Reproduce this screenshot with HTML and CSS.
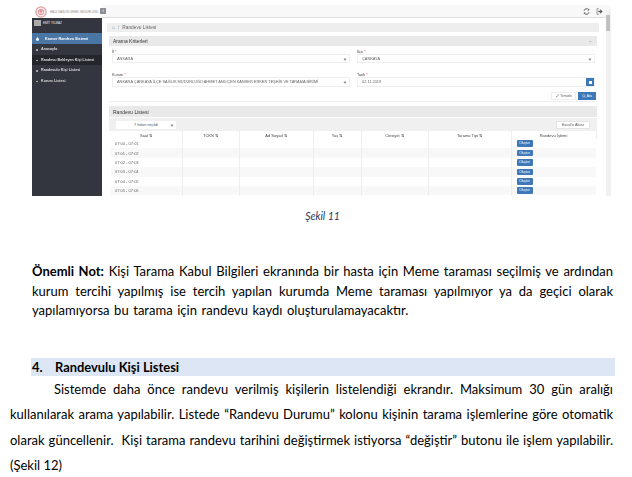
FILE: index.html
```html
<!DOCTYPE html>
<html lang="tr">
<head>
<meta charset="utf-8">
<title>Randevu Listesi</title>
<link rel="stylesheet" href="styles.css">
</head>
<body>
<div class="shot">
  <aside class="side">
    <div class="brand">
      <svg class="logo" viewBox="0 0 14 14"><circle cx="7" cy="7" r="6" fill="#f8eeee" stroke="#d9a0a0" stroke-width="1.4"/><circle cx="7" cy="7" r="3.200" fill="none" stroke="#d27c7c" stroke-width=".9"/><path d="M7 4.500v5M5 6h4" stroke="#c45" stroke-width=".7"/></svg>
      <span class="brand-text">HALK SAĞLIĞI GENEL MÜDÜRLÜĞÜ</span>
    </div>
    <div class="user"><span class="avatar"></span><span>EMİT YILMAZ</span></div>
    <div class="menu-title"><svg class="drop" viewBox="0 0 6 8"><path d="M3 0C4 2 6 3.500 6 5.200A3 2.800 0 0 1 0 5.200C0 3.500 2 2 3 0Z" fill="#fff"/></svg>Kanser Randevu Sistemi</div>
    <div class="menu-item">Anasayfa</div>
    <div class="menu-item current">Randevu Bekleyen Kişi Listesi</div>
    <div class="menu-item">Randevulu Kişi Listesi</div>
    <div class="menu-item">Kurum Listesi</div>
  </aside>
  <div class="app">
    <header class="topbar">
      <span class="back">‹</span>
      <span class="top-icons">
        <svg class="ic" viewBox="0 0 10 10"><path d="M1.500 4A3.600 3.600 0 0 1 8 2.500M8.500 6A3.600 3.600 0 0 1 2 7.500" fill="none" stroke="#555" stroke-width="1.300"/><path d="M8.800.8V3.500H6.100ZM1.200 9.200V6.500H3.900Z" fill="#555"/></svg>
        <svg class="ic" viewBox="0 0 10 10"><path d="M4 1H1.500V9H4" fill="none" stroke="#888" stroke-width="1.200"/><path d="M3.500 3.800H6V1.800L9.500 5 6 8.200V6.200H3.500Z" fill="#555"/></svg>
      </span>
    </header>
    <div class="content">
      <main class="main">
        <div class="crumb"><span class="home">⌂</span><span class="slash">/</span>Randevu Listesi</div>
        <section class="card search">
          <div class="card-head"><span>Arama Kriterleri</span><span class="minus">−</span></div>
          <div class="form">
            <div class="field"><label>İl <b>*</b></label><div class="select">ANKARA<i></i></div></div>
            <div class="field"><label>İlçe <b>*</b></label><div class="select">ÇANKAYA<i></i></div></div>
            <div class="field"><label>Kurum <b>*</b></label><div class="select tall">ANKARA ÇANKAYA İLÇE SAĞLIK MÜDÜRLÜĞÜ AHMET ANDIÇEN KANSER ERKEN TEŞHİS VE TARAMA BİRİMİ<i></i></div></div>
            <div class="field"><label>Tarih <b>*</b></label><div class="select tall">02.11.2019<span class="cal"></span></div></div>
          </div>
          <div class="actions">
            <span class="btn"><svg class="mini" viewBox="0 0 6 6"><path d="M1 5.500 3 2.500 4 3.500ZM3.500 2 5 .5 5.500 1 4.200 2.800Z" fill="#444"/></svg>Temizle</span>
            <span class="btn primary"><svg class="mini" viewBox="0 0 6 6"><circle cx="2.500" cy="2.500" r="1.700" fill="none" stroke="#fff" stroke-width=".7"/><path d="M3.800 3.800 5.500 5.500" stroke="#fff" stroke-width=".8"/></svg>Ara</span>
          </div>
        </section>
        <section class="card">
          <div class="card-head list"><span>Randevu Listesi</span></div>
          <div class="toolbar"><span class="cols">7 kolon seçildi<i></i></span><span class="excel">Excel'e Aktar</span></div>
          <table class="grid">
            <colgroup><col class="c1"><col class="c2"><col class="c3"><col class="c4"><col class="c5"><col class="c6"><col class="c7"></colgroup>
            <thead><tr><th>Saat ⇅</th><th>TCKN ⇅</th><th>Ad Soyad ⇅</th><th>Yaş ⇅</th><th>Cinsiyet ⇅</th><th>Tarama Tipi ⇅</th><th>Randevu İşlemi</th></tr></thead>
            <tbody>
              <tr><td>07:00 - 07:01</td><td></td><td></td><td></td><td></td><td></td><td><span class="ok">Oluştur</span></td></tr>
              <tr><td>07:01 - 07:02</td><td></td><td></td><td></td><td></td><td></td><td><span class="ok">Oluştur</span></td></tr>
              <tr><td>07:02 - 07:03</td><td></td><td></td><td></td><td></td><td></td><td><span class="ok">Oluştur</span></td></tr>
              <tr><td>07:03 - 07:04</td><td></td><td></td><td></td><td></td><td></td><td><span class="ok">Oluştur</span></td></tr>
              <tr><td>07:04 - 07:05</td><td></td><td></td><td></td><td></td><td></td><td><span class="ok">Oluştur</span></td></tr>
              <tr><td>07:05 - 07:06</td><td></td><td></td><td></td><td></td><td></td><td><span class="ok">Oluştur</span></td></tr>
              <tr><td></td><td></td><td></td><td></td><td></td><td></td><td><span class="ok"></span></td></tr>
            </tbody>
          </table>
        </section>
      </main>
      <div class="scroll"><span class="thumb"></span></div>
    </div>
  </div>
</div>
<p class="caption">Şekil 11</p>
<p class="note">
  <span class="line"><strong>Önemli Not:</strong> Kişi Tarama Kabul Bilgileri ekranında bir hasta için Meme taraması seçilmiş ve ardından</span>
  <span class="line">kurum tercihi yapılmış ise tercih yapılan kurumda Meme taraması yapılmıyor ya da geçici olarak</span>
  <span class="line end wide">yapılamıyorsa bu tarama için randevu kaydı oluşturulamayacaktır.</span>
</p>
<h2 class="band"><span class="num">4.</span>Randevulu Kişi Listesi</h2>
<p class="body">
  <span class="line first">Sistemde daha önce randevu verilmiş kişilerin listelendiği ekrandır. Maksimum 30 gün aralığı</span>
  <span class="line">kullanılarak arama yapılabilir. Listede “Randevu Durumu” kolonu kişinin tarama işlemlerine göre otomatik</span>
  <span class="line">olarak güncellenir.&nbsp; Kişi tarama randevu tarihini değiştirmek istiyorsa “değiştir” butonu ile işlem yapılabilir.</span>
  <span class="line end">(Şekil 12)</span>
</p>
</body>
</html>
```
FILE: styles.css
```css
* { box-sizing: border-box; }
html, body { margin: 0; height: 477px; overflow: hidden; background: #fff; }
body { font-family: "Lato", "Liberation Sans", sans-serif; color: #111; padding-top: 5px; }

.shot {
  display: flex; width: 579px; height: 191px; margin-left: 32px; overflow: hidden;
  font-family: "Liberation Sans", sans-serif; font-size: 4px; color: #555; filter: blur(.35px);
}
.side { width: 70px; flex: none; background: #33363e; color: #eee; }
.brand { height: 13px; background: #fff; display: flex; align-items: center; gap: 3px; padding-left: 3px; color: #888; font-size: 2.800px; white-space: nowrap; }
.logo { width: 12px; height: 12px; flex: none; }
.user { height: 15px; display: flex; align-items: flex-start; gap: 2px; padding: 2px 0 0 2px; font-size: 3px; line-height: 7px; }
.avatar { width: 7px; height: 6px; background: #aaa; }
.menu-title { height: 11px; background: #4a76a6; display: flex; align-items: center; gap: 6px; padding-left: 4px; font-weight: 700; font-size: 3.700px; color: #fff; }
.drop { width: 3px; height: 4px; }
.menu-item { height: 10.500px; line-height: 10.500px; padding-left: 9px; font-size: 3.700px; font-weight: 700; color: #ddd; position: relative; }
.menu-item::before { content: ""; position: absolute; left: 4px; top: 5px; width: 1.500px; height: 1.500px; background: #bbb; border-radius: 50%; }
.menu-item.current { background: #24262c; }

.app { flex: 1; display: flex; flex-direction: column; min-width: 0; }
.topbar { height: 13px; flex: none; background: #f8f8f8; border-bottom: 1px solid #ddd; display: flex; align-items: center; justify-content: space-between; padding-right: 8px; }
.back { width: 6px; height: 6px; margin-left: -2px; background: #8b8f93; color: #fff; font-size: 5px; line-height: 5px; text-align: center; }
.top-icons { display: flex; gap: 6px; }
.ic { width: 7px; height: 7px; display: block; }
.content { flex: 1; display: flex; min-height: 0; }
.main { flex: 1; min-width: 0; padding: 5px 7px 0 5px; overflow: hidden; }
.scroll { width: 5px; flex: none; background: #f1f1f1; margin-top: -8px; }
.thumb { display: block; width: 4px; height: 16px; margin-top: 5px; background: #c1c1c1; }

.crumb { height: 9px; background: #eee; line-height: 9px; padding-left: 5px; color: #666; font-size: 4.800px; }
.home { color: #6c8fc0; }
.slash { margin: 0 3px; color: #999; }
.card { margin: 4px 2px 0; }
.card.search { height: 66px; border-bottom: 1px solid #eee; }
.card-head { height: 10px; background: #e9e9e9; display: flex; justify-content: space-between; align-items: center; padding: 0 5px 0 4px; color: #333; font-size: 5px; }
.card-head.list { height: 11px; }
.minus { color: #888; }
.form { display: grid; grid-template-columns: 238px 238px; column-gap: 7px; padding: 4px 0 0 3px; }
.field { height: 23px; }
.field label { display: block; height: 4px; line-height: 4px; font-size: 3.800px; color: #444; }
.field label b { color: #d33; font-weight: 400; }
.select { height: 9px; line-height: 7px; border: 1px solid #eee; border-radius: 1px; padding: 0 4px; color: #666; font-size: 3.900px; position: relative; background: #fff; white-space: nowrap; overflow: hidden; }
.select.tall { height: 10px; line-height: 8px; }
.select i, .cols i { position: absolute; right: 3px; top: 3px; width: 2px; height: 2px; border-right: .6px solid #888; border-bottom: .6px solid #888; transform: rotate(45deg); }
.cal { position: absolute; right: 0; top: 0; width: 8px; height: 8px; background: #3f78b8; }
.cal::after { content: ""; position: absolute; left: 2.500px; top: 2.500px; width: 3px; height: 3px; background: #fff; }
.actions { display: flex; justify-content: flex-end; gap: 2px; margin-top: -4px; padding-right: 1px; }
.btn { height: 8px; line-height: 7px; border: 1px solid #eee; background: #fff; color: #666; font-size: 3.600px; width: 25px; display: flex; align-items: center; justify-content: center; gap: 1px; white-space: nowrap; }
.btn.primary { background: #3f78b8; border-color: #3f78b8; color: #fff; width: 18px; }
.mini { width: 4px; height: 4px; flex: none; }

.toolbar { height: 13px; background: #f0f0f0; margin-top: 1px; display: flex; align-items: center; justify-content: space-between; padding: 0 7px; width: 488px; }
.cols { width: 60px; height: 8px; line-height: 8px; background: #fff; text-align: center; font-size: 3.800px; position: relative; }
.excel { width: 34px; height: 8px; line-height: 7px; background: #fff; border: .5px solid #e4e4e4; text-align: center; font-size: 3.800px; }
.grid { table-layout: fixed; width: 485px; margin-left: 2px; border-collapse: collapse; font-size: 4px; }
.c1 { width: 71px; } .c2 { width: 57px; } .c3 { width: 74px; } .c4 { width: 48px; } .c5 { width: 67px; } .c6 { width: 83px; } .c7 { width: 85px; }
.grid th { height: 8px; font-weight: 400; color: #444; padding: 0; border-right: 1px solid #eee; background: #fff; white-space: nowrap; }
.grid td { height: 9.400px; padding: 0 0 0 4px; border-right: 1px solid #eee; color: #666; overflow: hidden; white-space: nowrap; }
.grid tbody tr:nth-child(even) td { background: #f8f8f8; }
.grid td:last-child { padding-left: 5px; border-right: 0; }
.ok { display: block; width: 16px; height: 6.500px; line-height: 6.500px; background: #3f78b8; color: #fff; text-align: center; font-size: 3.300px; border-radius: 1px; }

.caption { margin: 13px 0 0; text-align: center; font-family: "Lato", sans-serif; font-style: italic; font-size: 10.500px; line-height: 14px; color: #1f3864; padding-left: 13px; }
.note { margin: 39px 19px 0 32px; font-size: 13px; line-height: 19.500px; color: #000; }
.line { display: block; text-align: justify; text-align-last: justify; white-space: nowrap; }
.line.end { text-align-last: left; }
.line.wide { word-spacing: 1.300px; }
.line.first { margin-left: 44px; }
.band { margin: 37px 17px 0 31px; height: 18px; background: #dce6f4; font-size: 12.900px; line-height: 18px; font-weight: 700; color: #000; padding-left: 1px; display: flex; }
.num { width: 23px; }
.body { margin: 1px 19px 0 10px; font-size: 13px; line-height: 25.500px; color: #000; }
```
